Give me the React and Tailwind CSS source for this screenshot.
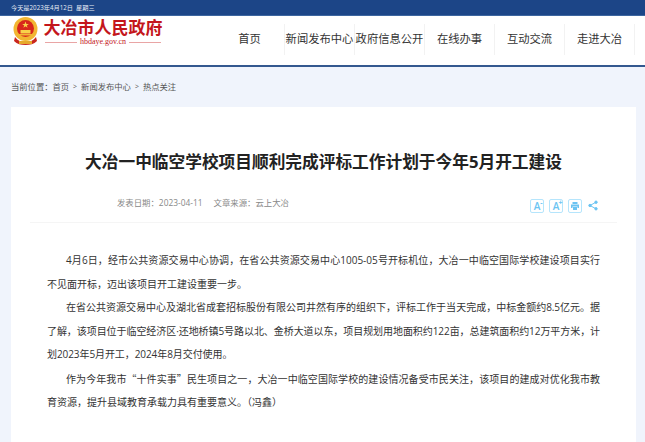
const font = { fontFamily: '"Open Sans", "Noto Sans CJK SC", sans-serif' };
const cjk = { fontFamily: '"Noto Sans CJK SC", sans-serif' };

const navItems = ["首页", "新闻发布中心", "政府信息公开", "在线办事", "互动交流", "走进大冶"];

function Emblem() {
  return (
    <svg width="27" height="30" viewBox="0 0 27 30" className="shrink-0">
      <circle cx="13.5" cy="12" r="12" fill="#f2b632" />
      <circle cx="13.5" cy="11.5" r="8.5" fill="#d8261c" />
      <path d="M13.5 4.5l.9 2.4h2.4l-2 1.5.8 2.4-2.1-1.5-2.1 1.5.8-2.4-2-1.5h2.4z" fill="#f8d24a" />
      <rect x="8.5" y="13" width="10" height="3.5" fill="#f8d24a" />
      <rect x="7" y="17" width="13" height="1.5" fill="#f2b632" />
      <path d="M3 20c3 4 6 5 10.500 5S21 24 24 20l1 4c-3 3-7 4-11.500 4S5 27 2 24z" fill="#c9271e" />
      <rect x="7" y="24" width="13" height="3" fill="#e6a92c" />
    </svg>
  );
}

function ToolButton({ children }) {
  return (
    <div className="relative flex h-[14px] w-[14px] items-center justify-center rounded-[2px] border border-[#b5e5fc] text-[#6cc4f2]">
      {children}
    </div>
  );
}

export default function App() {
  return (
    <div className="flex h-[442px] w-[645px] flex-col overflow-hidden bg-[#f0f4fc]" style={font}>
      <div className="flex h-[16px] shrink-0 items-center border-b border-[#3d66a0] bg-[#1c4587] pl-[11px] text-[6.200px] text-[#e6ecf5]">
        今天是2023年4月12日&nbsp;&nbsp;星期三
      </div>

      <div className="flex h-[51px] shrink-0 items-start border-b-2 border-[#33588f] bg-white">
        <div className="flex w-[215px] items-start pl-[12px] pt-px">
          <Emblem />
          <div className="ml-[4px] flex w-[120px] flex-col items-center">
            <div className="text-[17px] font-bold leading-[20px] whitespace-nowrap text-[#c4161c]" style={cjk}>
              大冶市人民政府
            </div>
            <div className="flex items-center gap-[3px] text-[8px] leading-[10px] whitespace-nowrap text-[#c4161c]" style={{ fontFamily: '"Liberation Serif", serif' }}>
              <span className="h-px w-[32px] bg-[#e9a5a5]" />
              hbdaye.gov.cn
              <span className="h-px w-[32px] bg-[#e9a5a5]" />
            </div>
          </div>
        </div>
        <div className="flex pt-[8px]">
          {navItems.map((item) => (
            <div key={item} className="flex h-[31px] w-[70px] items-center justify-center border-r border-[#f2f2f2] text-[11.300px] whitespace-nowrap text-[#333333]">
              {item}
            </div>
          ))}
        </div>
      </div>

      <div className="flex h-[40px] shrink-0 items-center gap-[4px] pl-[11px] text-[8.300px] text-[#555555]">
        <span>当前位置：首页</span>
        <span className="text-[7px]">&gt;</span>
        <span>新闻发布中心</span>
        <span className="text-[7px]">&gt;</span>
        <span>热点关注</span>
      </div>

      <div className="ml-[11px] w-[625px] flex-1 bg-white">
        <h1 className="pt-[43px] text-center text-[16.700px] leading-[24px] font-bold text-[#222222]">
          大冶一中临空学校项目顺利完成评标工作计划于今年5月开工建设
        </h1>
        <div className="mx-[19px] mt-[21px] flex h-[28px] items-center justify-between border-b border-[#f5f5f5] pb-[6px] pl-[87px] pr-[19px]">
          <div className="mb-[4px] flex gap-[11px] text-[8.400px] text-[#888888]">
            <span>发表日期：2023-04-11</span>
            <span>文章来源：云上大冶</span>
          </div>
          <div className="flex items-center gap-[5px]">
            <ToolButton>
              <span className="text-[10px] leading-none font-semibold">A</span>
              <span className="absolute top-[-1px] right-[0.500px] text-[7px] leading-none font-bold">-</span>
            </ToolButton>
            <ToolButton>
              <span className="text-[10px] leading-none font-semibold">A</span>
              <span className="absolute top-[-1px] right-[-0.500px] text-[7px] leading-none font-bold">+</span>
            </ToolButton>
            <ToolButton>
              <svg width="10" height="10" viewBox="0 0 10 10" fill="currentColor">
                <path d="M2.500 1h5v2h-5zM1 3.500h8V7H7.500V5.500h-5V7H1zM3 6h4v3H3z" />
              </svg>
            </ToolButton>
            <svg width="10" height="11" viewBox="0 0 10 11" fill="#6cc4f2" stroke="#6cc4f2" className="ml-[1px]">
              <path d="M8 2.200L2 5.500l6 3.300" fill="none" />
              <circle cx="8" cy="2.200" r="1.200" />
              <circle cx="2" cy="5.500" r="1.200" />
              <circle cx="8" cy="8.800" r="1.200" />
            </svg>
          </div>
        </div>
        <div className="mt-[26px] px-[36px] text-justify text-[10px] leading-[23.500px] text-[#333333]">
          <p className="indent-[19px]">
            4月6日，经市公共资源交易中心协调，在省公共资源交易中心1005-05号开标机位，大冶一中临空国际学校建设项目实行不见面开标，迈出该项目开工建设重要一步。
          </p>
          <p className="indent-[19px] tracking-[-0.080px]">
            在省公共资源交易中心及湖北省成套招标股份有限公司井然有序的组织下，评标工作于当天完成，中标金额约8.5亿元。据了解，该项目位于临空经济区·还地桥镇5号路以北、金桥大道以东，项目规划用地面积约122亩，总建筑面积约12万平方米，计划2023年5月开工，2024年8月交付使用。
          </p>
          <p className="indent-[19px]" style={cjk}>
            作为今年我市“十件实事”民生项目之一，大冶一中临空国际学校的建设情况备受市民关注，该项目的建成对优化我市教育资源，提升县域教育承载力具有重要意义。（冯鑫）
          </p>
        </div>
      </div>
    </div>
  );
}
